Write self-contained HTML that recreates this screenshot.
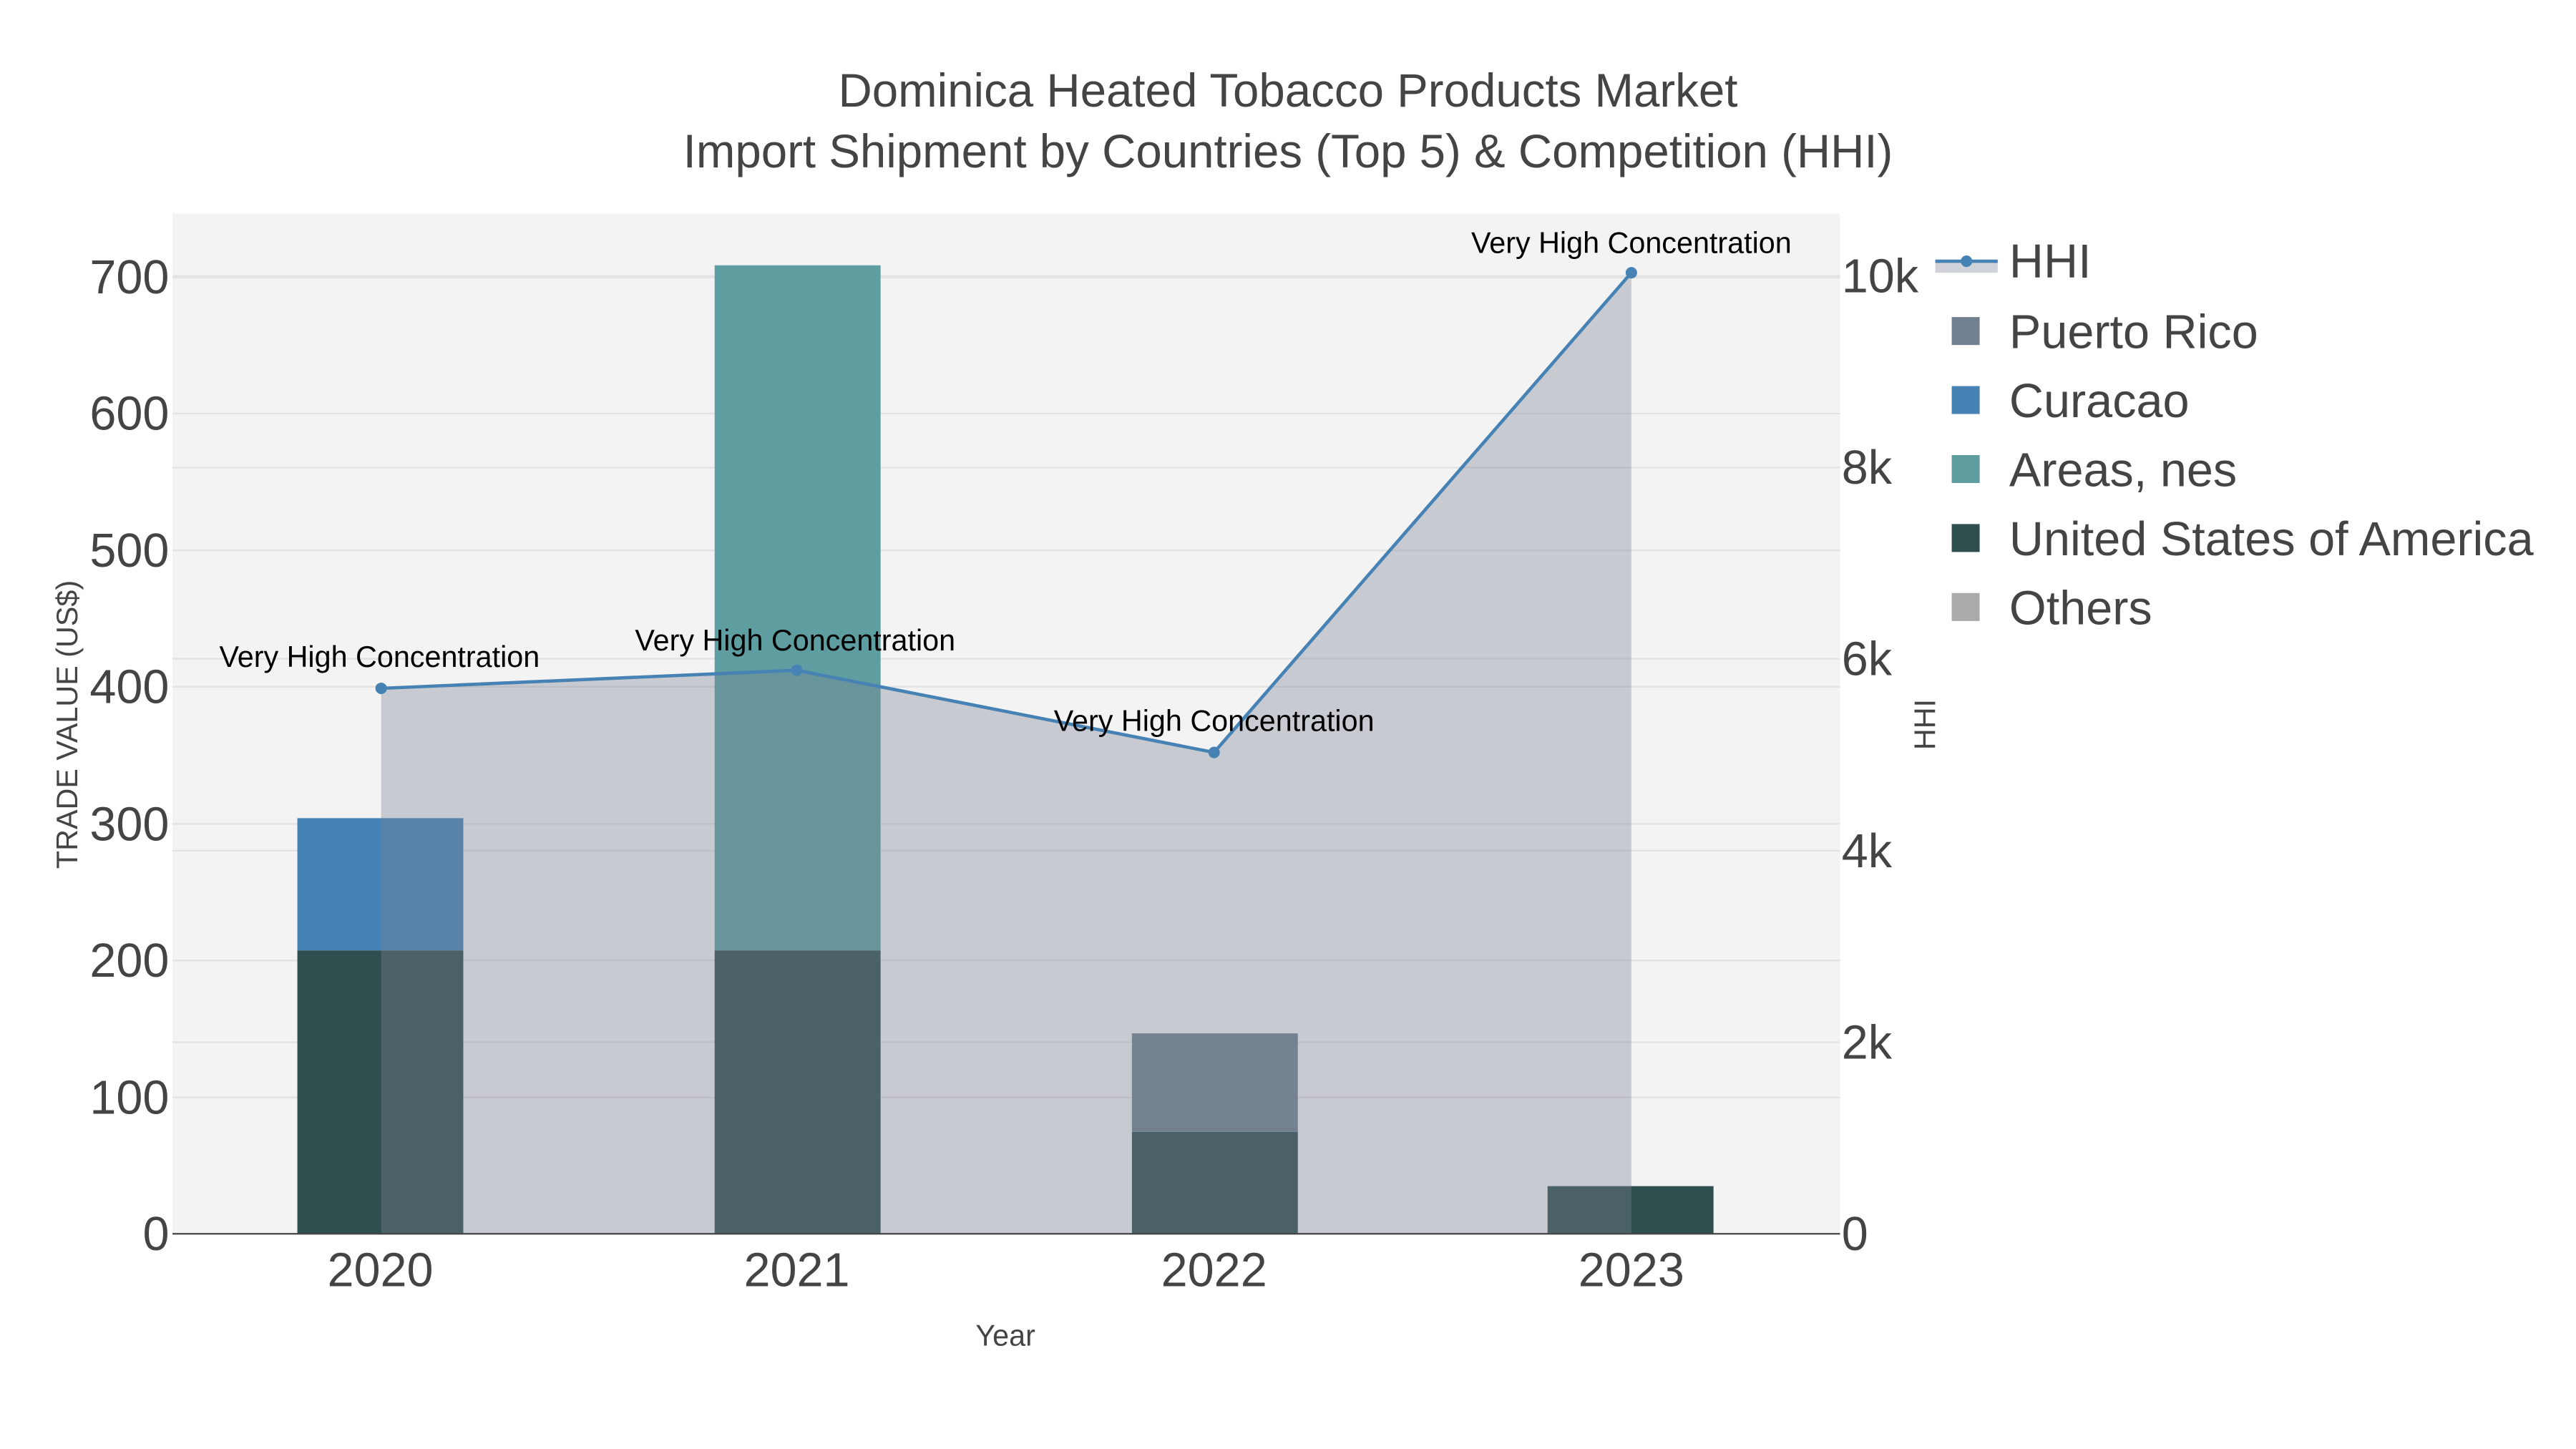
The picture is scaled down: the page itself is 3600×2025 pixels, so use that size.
<!DOCTYPE html>
<html><head><meta charset="utf-8"><style>html,body{margin:0;padding:0;background:#fff;}svg{display:block}</style></head>
<body>
<svg width="3600" height="2025" viewBox="0 0 1568 882" xmlns="http://www.w3.org/2000/svg" font-family="Liberation Sans, sans-serif">
<rect x="0" y="0" width="1568" height="882" fill="#fff"/>
<rect x="105" y="130" width="1015" height="621" fill="#f3f3f3"/>
<g stroke="#e2e2e2" stroke-width="1">
<line x1="105" x2="1120" y1="668" y2="668"/><line x1="105" x2="1120" y1="584.6" y2="584.6"/><line x1="105" x2="1120" y1="501.5" y2="501.5"/><line x1="105" x2="1120" y1="418" y2="418"/><line x1="105" x2="1120" y1="335" y2="335"/><line x1="105" x2="1120" y1="251.7" y2="251.7"/><line x1="105" x2="1120" y1="168.5" y2="168.5" stroke-width="2"/>
<line x1="105" x2="1120" y1="634.4" y2="634.4"/><line x1="105" x2="1120" y1="517.8" y2="517.8"/><line x1="105" x2="1120" y1="401" y2="401"/><line x1="105" x2="1120" y1="284.6" y2="284.6"/>
</g>
<rect x="181" y="578.5" width="101" height="172.5" fill="#2f4f4f"/>
<rect x="181" y="498" width="101" height="80.5" fill="#4682b4"/>
<rect x="435" y="578.5" width="101" height="172.5" fill="#2f4f4f"/>
<rect x="435" y="161.5" width="101" height="417" fill="#5f9ea0"/>
<rect x="689" y="689" width="101" height="62" fill="#2f4f4f"/>
<rect x="689" y="629" width="101" height="60" fill="#708090"/>
<rect x="942" y="722" width="101" height="29" fill="#2f4f4f"/>
<polygon points="232,419 485,408 739,458 993,166 993,751 232,751" fill="rgb(123,129,148)" fill-opacity="0.36"/>
<polyline points="232,419 485,408 739,458 993,166" fill="none" stroke="#4682b4" stroke-width="2"/>
<g fill="#4682b4"><circle cx="232" cy="419" r="3.5"/><circle cx="485" cy="408" r="3.5"/><circle cx="739" cy="458" r="3.5"/><circle cx="993" cy="166" r="3.5"/></g>
<line x1="105" x2="1120" y1="751" y2="751" stroke="#444" stroke-width="1"/>
<g font-size="18" fill="#000" text-anchor="middle">
<text x="231" y="406">Very High Concentration</text>
<text x="484" y="396">Very High Concentration</text>
<text x="739" y="445">Very High Concentration</text>
<text x="993" y="154">Very High Concentration</text>
</g>
<g font-size="29" fill="#444" text-anchor="end">
<text x="103" y="761">0</text><text x="103" y="678">100</text><text x="103" y="594.5">200</text><text x="103" y="511.5">300</text><text x="103" y="428">400</text><text x="103" y="345">500</text><text x="103" y="261.5">600</text><text x="103" y="178.5">700</text>
</g>
<g font-size="29" fill="#444" text-anchor="start">
<text x="1121" y="761">0</text><text x="1121" y="644.5">2k</text><text x="1121" y="528">4k</text><text x="1121" y="411">6k</text><text x="1121" y="294.5">8k</text><text x="1121" y="178">10k</text>
</g>
<g font-size="29" fill="#444" text-anchor="middle">
<text x="231.5" y="783">2020</text><text x="485" y="783">2021</text><text x="739" y="783">2022</text><text x="993" y="783">2023</text>
</g>
<text x="612" y="819" font-size="18" fill="#444" text-anchor="middle">Year</text>
<text transform="translate(47,441) rotate(-90)" font-size="18" fill="#444" text-anchor="middle">TRADE VALUE (US$)</text>
<text transform="translate(1178,441) rotate(-90)" font-size="18" fill="#444" text-anchor="middle">HHI</text>
<g font-size="28.5" fill="#444" text-anchor="middle">
<text x="784" y="65">Dominica Heated Tobacco Products Market</text>
<text x="784" y="102">Import Shipment by Countries (Top 5) &amp; Competition (HHI)</text>
</g>
<rect x="1178" y="159" width="38" height="7" fill="rgb(123,129,148)" fill-opacity="0.36"/>
<line x1="1178" x2="1216" y1="159" y2="159" stroke="#4682b4" stroke-width="2"/>
<circle cx="1197" cy="159" r="3.5" fill="#4682b4"/>
<rect x="1188" y="193" width="17" height="17" fill="#708090"/>
<rect x="1188" y="235" width="17" height="17" fill="#4682b4"/>
<rect x="1188" y="277" width="17" height="17" fill="#5f9ea0"/>
<rect x="1188" y="319" width="17" height="17" fill="#2f4f4f"/>
<rect x="1188" y="361" width="17" height="17" fill="#aaaaaa"/>
<g font-size="29" fill="#444">
<text x="1223" y="169">HHI</text>
<text x="1223" y="212">Puerto Rico</text>
<text x="1223" y="254">Curacao</text>
<text x="1223" y="296">Areas, nes</text>
<text x="1223" y="338">United States of America</text>
<text x="1223" y="380">Others</text>
</g>
</svg>
</body></html>
